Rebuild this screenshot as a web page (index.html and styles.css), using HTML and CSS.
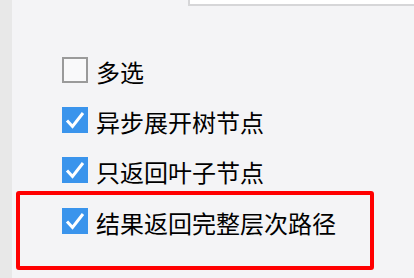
FILE: index.html
```html
<!DOCTYPE html>
<html lang="zh-CN">
<head>
    <meta charset="UTF-8">
    <meta name="viewport" content="width=device-width, initial-scale=1.0">
    <title>树选项</title>
    <link rel="stylesheet" href="styles.css">
</head>
<body>
    <div class="side-strip"></div>
    <div class="main">
        <div class="field-edge"></div>
        <div class="options">
            <label class="option">
                <span class="box"></span>
                <span class="text">多选</span>
            </label>
            <label class="option">
                <span class="box checked">
                    <svg viewBox="0 0 26 26" width="26" height="26"><path d="M5 13.5 L10.5 19.5 L21 6" fill="none" stroke="#fff" stroke-width="3"/></svg>
                </span>
                <span class="text">异步展开树节点</span>
            </label>
            <label class="option">
                <span class="box checked">
                    <svg viewBox="0 0 26 26" width="26" height="26"><path d="M5 13.5 L10.5 19.5 L21 6" fill="none" stroke="#fff" stroke-width="3"/></svg>
                </span>
                <span class="text">只返回叶子节点</span>
            </label>
            <div class="highlight">
                <label class="option">
                    <span class="box checked">
                        <svg viewBox="0 0 26 26" width="26" height="26"><path d="M5 13.5 L10.5 19.5 L21 6" fill="none" stroke="#fff" stroke-width="3"/></svg>
                    </span>
                    <span class="text">结果返回完整层次路径</span>
                </label>
            </div>
        </div>
    </div>
</body>
</html>
```
FILE: styles.css
```css
body {
    font-family: "Noto Sans CJK SC", "Noto Sans", sans-serif;
    margin: 0;
    padding: 0;
    display: flex;
    height: 100vh;
    overflow: hidden;
    background-color: #f4f4f6;
}
.side-strip {
    width: 12px;
    flex-shrink: 0;
    background-color: #e8e8e8;
}
.main {
    flex: 1;
    display: flex;
    flex-direction: column;
}
.field-edge {
    height: 4px;
    margin-left: 176px;
    background-color: #ffffff;
    border-left: 2px solid #d6d6d8;
    border-bottom: 2px solid #d6d6d8;
}
.options {
    display: flex;
    flex-direction: column;
    gap: 24px;
    margin-top: 51px;
    padding-left: 4px;
}
.option {
    display: flex;
    align-items: center;
    gap: 8px;
    height: 26px;
    padding-left: 46px;
}
.box {
    width: 26px;
    height: 26px;
    box-sizing: border-box;
    border: 2px solid #9a9a9a;
    background-color: #f9f9fa;
    flex-shrink: 0;
}
.box.checked {
    border: none;
    background-color: #3a94ec;
}
.box svg {
    display: block;
}
.text {
    font-size: 24px;
    line-height: 26px;
    padding-top: 4px;
    color: #000000;
}
.highlight {
    margin-top: -16px;
    margin-right: 40px;
    height: 58px;
    border: 4px solid #ff0000;
    border-radius: 3px;
    padding-top: 13px;
}
.highlight .option {
    padding-left: 42px;
}
```
